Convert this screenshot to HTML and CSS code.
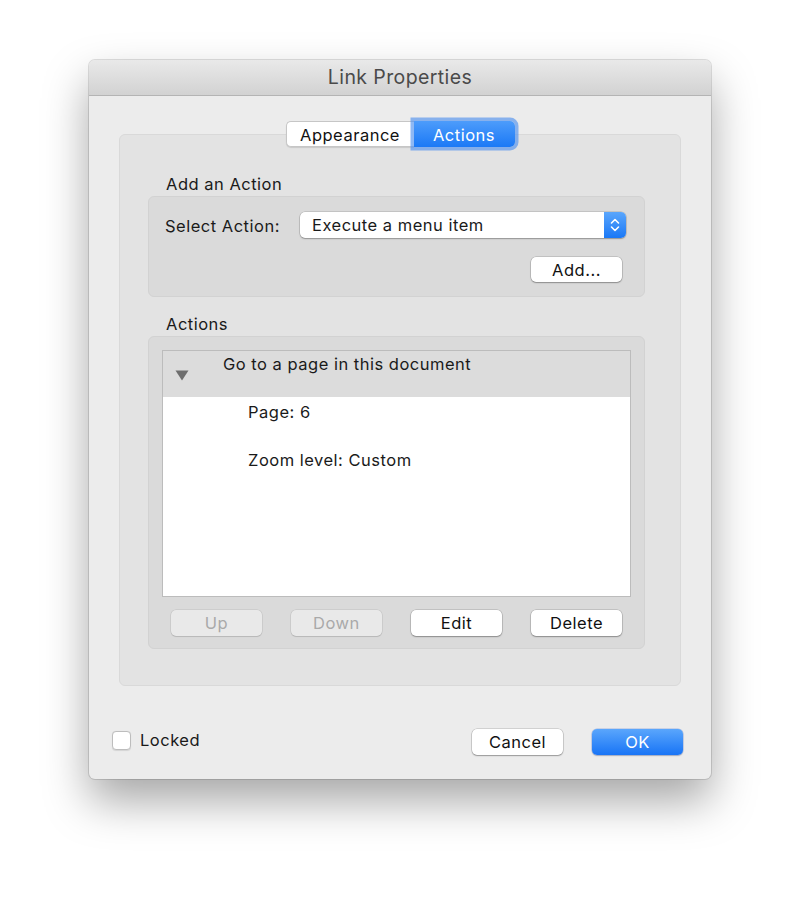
FILE: index.html
```html
<!DOCTYPE html>
<html>
<head>
<meta charset="utf-8">
<link rel="stylesheet" href="styles.css">
</head>
<body>
<div class="window">
  <div class="titlebar">Link Properties</div>
  <div class="content">
    <div class="tabs">
      <div class="seg">
        <span class="tab">Appearance</span>
        <span class="tab active">Actions</span>
      </div>
    </div>
    <div class="tabbox">
      <div class="glabel">Add an Action</div>
      <div class="group g1">
        <div class="selrow">
          <span class="sellabel">Select Action:</span>
          <div class="popup">
            <span class="popup-text">Execute a menu item</span>
            <span class="stepper">
              <svg width="10" height="16" viewBox="0 0 10 16"><path d="M1.5 6 L5 2.5 L8.5 6 M1.5 10 L5 13.5 L8.5 10" fill="none" stroke="#fff" stroke-width="1.6" stroke-linecap="round" stroke-linejoin="round"/></svg>
            </span>
          </div>
        </div>
        <div class="addrow"><button class="btn">Add...</button></div>
      </div>
      <div class="glabel">Actions</div>
      <div class="group g2">
        <div class="list">
          <div class="listhead">
            <svg class="tri" width="14" height="11" viewBox="0 0 14 11"><path d="M0.5 0.5 H13.5 L7 10.5 Z" fill="#6e6e6e"/></svg>
            <span class="headtext">Go to a page in this document</span>
          </div>
          <div class="listbody">
            <div class="item">Page: 6</div>
            <div class="item">Zoom level: Custom</div>
          </div>
        </div>
        <div class="btnrow">
          <button class="btn disabled">Up</button>
          <button class="btn disabled">Down</button>
          <button class="btn">Edit</button>
          <button class="btn">Delete</button>
        </div>
      </div>
    </div>
    <div class="footer">
      <label class="check"><span class="box"></span><span>Locked</span></label>
      <div class="actions">
        <button class="btn">Cancel</button>
        <button class="btn primary">OK</button>
      </div>
    </div>
  </div>
</div>
</body>
</html>
```
FILE: styles.css
```css
* { box-sizing: border-box; }
html, body { margin: 0; padding: 0; background: #ffffff; }
body {
  font-family: "Inter", "Liberation Sans", sans-serif;
  font-size: 16.5px;
  letter-spacing: 0.5px;
  color: #1a1a1a;
  height: 897px;
  overflow: hidden;
}
.window {
  margin: 60px 0 0 89px;
  width: 622px;
  height: 719px;
  background: #ececec;
  border-radius: 6px;
  box-shadow: 0 0 0 1px rgba(0,0,0,0.12), 0 22px 45px rgba(0,0,0,0.35);
  overflow: hidden;
}
.titlebar {
  height: 36px;
  background: linear-gradient(#e9e9e9, #d2d2d2);
  border-bottom: 1px solid #b4b4b4;
  text-align: center;
  font-size: 19.5px;
  letter-spacing: 0.4px;
  line-height: 35px;
  color: #4a4a4a;
}
.content {
  padding: 25px 30px 0 30px;
}
.tabs {
  display: flex;
  justify-content: center;
  position: relative;
  z-index: 1;
}
.seg {
  display: flex;
  height: 26px;
}
.tab {
  display: flex;
  align-items: center;
  justify-content: center;
  height: 26px;
  background: #fff;
  color: #111;
  padding-top: 1px;
}
.tab:first-child {
  width: 128px;
  border: 1px solid #c6c6c6;
  border-right: none;
  border-radius: 5px 0 0 5px;
  box-shadow: 0 1px 1px rgba(0,0,0,0.12);
}
.tab.active {
  width: 101px;
  background: linear-gradient(#4d9cfb, #1b79f6);
  color: #fff;
  border-radius: 0 5px 5px 0;
  box-shadow: 0 0 0 3.5px rgba(82,146,238,0.65);
}
.tabbox {
  margin-top: -13px;
  height: 552px;
  background: #e3e3e3;
  border: 1px solid #d9d9d9;
  border-radius: 6px;
  padding: 40px 35px 0 28px;
}
.glabel {
  padding-left: 18px;
  height: 21px;
  line-height: 19px;
  color: #1a1a1a;
}
.group {
  background: #dadada;
  border: 1px solid #d2d2d2;
  border-radius: 6px;
}
.g1 {
  height: 101px;
  padding: 15px 18px 0 16px;
  margin-bottom: 18px;
}
.selrow {
  display: flex;
  align-items: center;
  justify-content: space-between;
  height: 26px;
}
.sellabel { color: #1a1a1a; padding-top: 2px; }
.popup {
  width: 326px;
  height: 26px;
  background: #fff;
  border-radius: 5px;
  box-shadow: 0 0 0 0.5px rgba(0,0,0,0.2), 0 1px 1.5px rgba(0,0,0,0.25);
  display: flex;
  align-items: center;
  justify-content: space-between;
  overflow: hidden;
}
.popup-text { padding-left: 12px; }
.stepper {
  width: 22px;
  height: 26px;
  background: linear-gradient(#5aa6fc, #1a78f6);
  display: flex;
  align-items: center;
  justify-content: center;
}
.addrow {
  display: flex;
  justify-content: flex-end;
  margin-top: 19px;
  padding-right: 4px;
}
.btn {
  font-family: inherit;
  font-size: 16.5px;
  letter-spacing: 0.5px;
  width: 91px;
  height: 25px;
  padding: 0;
  background: #fff;
  color: #111;
  border: none;
  border-radius: 5px;
  box-shadow: 0 0 0 0.5px rgba(0,0,0,0.22), 0 1px 1.5px rgba(0,0,0,0.28);
}
.btn.disabled {
  background: #e9e9e9;
  color: #a9a9a9;
  box-shadow: 0 0 0 0.5px rgba(0,0,0,0.12), 0 1px 1px rgba(0,0,0,0.1);
}
.btn.primary {
  background: linear-gradient(#5aa6fc, #1874f6);
  color: #fff;
  box-shadow: 0 0 0 0.5px rgba(0,60,200,0.3), 0 1px 1.5px rgba(0,0,0,0.2);
}
.g2 {
  height: 313px;
  padding: 13px 13px 0 13px;
}
.list {
  height: 247px;
  border: 1px solid #bcbcbc;
  background: #fff;
}
.listhead {
  height: 46px;
  background: #dcdcdc;
  position: relative;
  padding-left: 60px;
  padding-top: 3px;
  line-height: 20px;
}
.tri {
  position: absolute;
  left: 12px;
  top: 19px;
}
.listbody {
  padding: 4px 0 0 85px;
}
.item {
  height: 48px;
  line-height: 22px;
}
.btnrow {
  display: flex;
  justify-content: space-between;
  padding: 0 9px;
  margin-top: 13px;
}
.btnrow .btn { height: 26px; }
.footer {
  display: flex;
  justify-content: space-between;
  align-items: center;
  margin-top: 43px;
}
.check {
  display: flex;
  align-items: center;
  margin-left: -7px;
  margin-top: -4px;
  gap: 9px;
}
.box {
  width: 19px;
  height: 19px;
  background: #fff;
  border: 1px solid #bdbdbd;
  border-radius: 4px;
  box-shadow: 0 0.5px 1px rgba(0,0,0,0.1);
}
.actions {
  display: flex;
  gap: 29px;
  margin-right: -2px;
}
.actions .btn { height: 26px; }
```
